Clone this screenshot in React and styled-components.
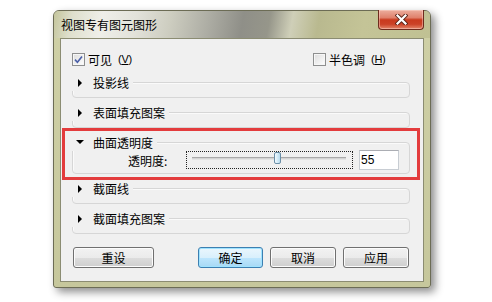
import React from 'react';
import styled, { createGlobalStyle } from 'styled-components';

const GlobalStyle = createGlobalStyle`
    body {
        margin: 0;
        background: #ffffff;
        font-family: "Noto Sans CJK SC", "Liberation Sans", sans-serif;
    }
    * {
        box-sizing: border-box;
    }
`;

//Window chrome
const Page = styled.div`
    width: 492px;
    height: 302px;
    padding: 10px 0 0 53px;
`;

const Window = styled.div`
    width: 378px;
    height: 278px;
    display: flex;
    flex-direction: column;
    border: 1px solid #6c6c55;
    border-radius: 6px 6px 3px 3px;
    background: linear-gradient(180deg, #cfd0a6 0%, #c6c79c 100%);
    box-shadow: 4px 4px 9px rgba(0, 0, 0, 0.45);
`;

const TitleBar = styled.div`
    height: 27px;
    display: flex;
    align-items: flex-start;
    padding-left: 7px;
    border-radius: 5px 5px 0 0;
    background: linear-gradient(
        100deg,
        #c4c59c 0%,
        #dedfcc 5%,
        #efefe9 13%,
        #e2e2da 22%,
        #cdcdc0 31%,
        #adada4 41%,
        #8f8f88 50%,
        #96968a 57%,
        #cfcfb8 63%,
        #b9b98f 70%,
        #c4c497 82%,
        #c0c193 100%
    );
`;

const Title = styled.span`
    margin-top: 5px;
    font-size: 12px;
    line-height: 17px;
    color: #000;
`;

const CloseButton = styled.div`
    margin: -1px 6px 0 auto;
    width: 46px;
    height: 20px;
    display: flex;
    align-items: center;
    justify-content: center;
    border: 1px solid #6e2b1d;
    border-top: none;
    border-radius: 0 0 4px 4px;
    background: linear-gradient(
        180deg,
        #ecae9e 0%,
        #e0816c 40%,
        #c93a1e 52%,
        #cb4227 75%,
        #e4866a 100%
    );
    box-shadow: inset 0 0 0 1px rgba(255, 220, 210, 0.45);
`;

const Client = styled.div`
    position: relative;
    flex: 1;
    margin: 0 6px 5px 6px;
    padding: 14px 0 0 11px;
    border: 1px solid #8b8c72;
    background: #f0f0f0;
`;

//Checkboxes
const CheckRow = styled.div`
    display: grid;
    grid-template-columns: 241px auto;
    height: 13px;
    align-items: center;
`;

const CheckItem = styled.label`
    display: flex;
    align-items: center;
    gap: 3px;
    font-size: 12px;
    line-height: 13px;
    color: #000;
`;

const Box = styled.span`
    width: 13px;
    height: 13px;
    display: flex;
    align-items: center;
    justify-content: center;
    border: 1px solid #8e8f8f;
    background: linear-gradient(135deg, #dcdcdc 0%, #f4f4f4 70%, #ffffff 100%);
    box-shadow: inset 0 0 0 1px #f6f6f6;
`;

const Mnemonic = styled.span`
    margin-left: 3px;
    font-family: "Liberation Sans", sans-serif;
    font-size: 11px;
    letter-spacing: -0.3px;
`;

//Collapsible groups
const Sections = styled.div`
    margin-top: 16px;
    width: 338px;
    display: flex;
    flex-direction: column;
    gap: 14px;
`;

const Section = styled.div`
    height: ${props => (props.$open ? 32 : 16)}px;
    border: 1px solid #d6d6d6;
    border-radius: 4px;
    box-shadow: inset 1px 1px 0 #fafafa;
`;

const Legend = styled.div`
    width: fit-content;
    height: 17px;
    margin: -9px 0 0 -1px;
    padding: 0 4px 0 3px;
    display: flex;
    align-items: center;
    background: #f0f0f0;
    font-size: 12px;
    color: #000;
`;

const Twisty = styled.span`
    width: 9px;
    margin-right: 9px;
    display: flex;
    justify-content: center;
    &::before {
        content: "";
        border-style: solid;
        border-color: transparent;
        ${props =>
            props.$open
                ? 'border-width: 4px 4px 0 4px; border-top-color: #000; margin-top: -2px;'
                : 'border-width: 4px 0 4px 4px; border-left-color: #000;'}
    }
`;

const SliderRow = styled.div`
    height: 20px;
    margin-top: -1px;
    padding-left: 55px;
    display: flex;
    align-items: center;
`;

const FieldLabel = styled.span`
    width: 58px;
    font-size: 12px;
    color: #000;
`;

const Slider = styled.div`
    width: 167px;
    height: 18px;
    margin-right: 6px;
    padding: 5px 6px 0 5px;
    display: flex;
    align-items: flex-start;
    border: 1px dotted #222;
`;

const Track = styled.div`
    position: relative;
    flex: 1;
    height: 3px;
    border-top: 1px solid #a9a9a9;
    border-bottom: 1px solid #e4e4e4;
    background: #d4d4d4;
`;

const Thumb = styled.div`
    position: absolute;
    top: -6px;
    width: 7px;
    height: 12px;
    margin-left: -3px;
    border: 1px solid #6b8fa8;
    border-radius: 2px;
    background: linear-gradient(90deg, #f2f9fd 0%, #d4ecf8 50%, #b9dcef 100%);
`;

const NumberInput = styled.input`
    width: 40px;
    height: 20px;
    padding: 0 0 0 1px;
    border: 1px solid #c8cdd3;
    border-top-color: #abadb3;
    background: #fff;
    font-family: "Liberation Sans", sans-serif;
    font-size: 12px;
    color: #000;
    outline: none;
`;

//Buttons
const ButtonRow = styled.div`
    margin-top: 13px;
    width: 338px;
    padding: 0 1px;
    display: flex;
    justify-content: space-between;
`;

const ButtonGroup = styled.div`
    display: flex;
    gap: 7px;
`;

const Button = styled.button`
    width: ${props => props.$width}px;
    height: 21px;
    padding: 0;
    border: 1px solid ${props => (props.$default ? '#3c7fb1' : '#707070')};
    border-radius: 3px;
    font-family: "Noto Sans CJK SC", sans-serif;
    font-size: 12px;
    color: #000;
    background: ${props =>
        props.$default
            ? 'linear-gradient(180deg, #eaf6fd 0%, #d9f0fc 50%, #bee6fd 51%, #a7d9f5 100%)'
            : 'linear-gradient(180deg, #f2f2f2 0%, #ebebeb 50%, #dddddd 51%, #cfcfcf 100%)'};
    box-shadow: inset 0 0 0 1px ${props => (props.$default ? '#9fe3ff' : '#fcfcfc')};
`;

const Highlight = styled.div`
    position: absolute;
    left: 1px;
    top: 89px;
    width: 358px;
    height: 52px;
    border: 3px solid #e33c3d;
`;

const CheckMark = () => (
    <svg width="9" height="9" viewBox="0 0 9 9">
        <path d="M1 4.6 L3.4 7.2 L8 1.4" fill="none" stroke="#4a5fa8" strokeWidth="1.6" />
    </svg>
);

const CloseGlyph = () => (
    <svg width="13" height="11" viewBox="0 0 13 11">
        <path d="M2.5 1.5 L10.5 9.5 M10.5 1.5 L2.5 9.5" stroke="#5a2418" strokeWidth="4" strokeLinecap="square" />
        <path d="M2.5 1.5 L10.5 9.5 M10.5 1.5 L2.5 9.5" stroke="#ffffff" strokeWidth="2.2" strokeLinecap="square" />
    </svg>
);

const groups = [
    { label: '投影线' },
    { label: '表面填充图案' },
    { label: '曲面透明度', open: true },
    { label: '截面线' },
    { label: '截面填充图案' },
];

const App = () => {
    const transparency = 55;

    return (
        <Page>
            <GlobalStyle />
            <Window>
                <TitleBar>
                    <Title>视图专有图元图形</Title>
                    <CloseButton>
                        <CloseGlyph />
                    </CloseButton>
                </TitleBar>
                <Client>
                    <CheckRow>
                        <CheckItem>
                            <Box><CheckMark /></Box>
                            可见<Mnemonic>(<u>V</u>)</Mnemonic>
                        </CheckItem>
                        <CheckItem>
                            <Box />
                            半色调<Mnemonic>(<u>H</u>)</Mnemonic>
                        </CheckItem>
                    </CheckRow>
                    <Sections>
                        {groups.map(g => (
                            <Section key={g.label} $open={g.open}>
                                <Legend>
                                    <Twisty $open={g.open} />
                                    {g.label}
                                </Legend>
                                {g.open && (
                                    <SliderRow>
                                        <FieldLabel>透明度:</FieldLabel>
                                        <Slider>
                                            <Track>
                                                <Thumb style={{ left: `${transparency}%` }} />
                                            </Track>
                                        </Slider>
                                        <NumberInput readOnly value={transparency} />
                                    </SliderRow>
                                )}
                            </Section>
                        ))}
                    </Sections>
                    <ButtonRow>
                        <Button $width={81}>重设</Button>
                        <ButtonGroup>
                            <Button $width={65} $default>确定</Button>
                            <Button $width={66}>取消</Button>
                            <Button $width={66}>应用</Button>
                        </ButtonGroup>
                    </ButtonRow>
                    <Highlight />
                </Client>
            </Window>
        </Page>
    );
};

export default App;
